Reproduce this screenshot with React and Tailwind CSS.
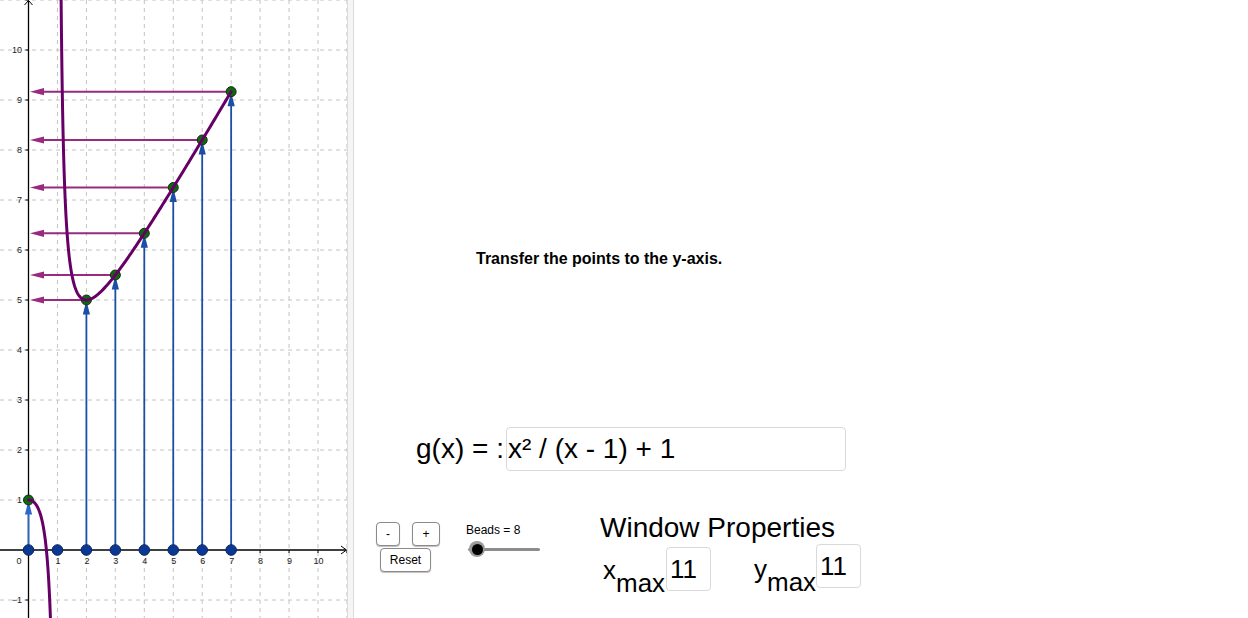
import React from "react";

const X0 = 28.5;
const UX = 28.95;
const Y0 = 550;
const UY = 50;
const X = (x) => X0 + x * UX;
const Y = (y) => Y0 - y * UY;
const g = (x) => (x * x) / (x - 1) + 1;

function curvePath() {
  let d = "";
  for (let i = 0; i <= 160; i++) {
    const x = (0.8 * i) / 160;
    d += (i === 0 ? "M" : "L") + X(x).toFixed(2) + " " + Y(g(x)).toFixed(2) + " ";
  }
  for (let i = 0; i <= 400; i++) {
    const x = 1 + 0.105 * Math.pow(6 / 0.105, i / 400);
    d += (i === 0 ? "M" : "L") + X(x).toFixed(2) + " " + Y(g(x)).toFixed(2) + " ";
  }
  return d;
}

function Graph() {
  const W = 347;
  const H = 618;
  const vx = [];
  for (let k = 1; k <= 11; k++) vx.push(X(k));
  const hy = [];
  for (let j = -1; j <= 11; j++) if (j !== 0) hy.push(Y(j));
  const ks = [0, 2, 3, 4, 5, 6, 7];
  const blue = "#1a4fa3";
  const mag = "#992a7d";
  return (
    <svg width={W} height={H} viewBox={`0 0 ${W} ${H}`} className="block shrink-0">
      <rect x="0" y="0" width={W} height={H} fill="#ffffff" />
      {vx.map((x, i) => (
        <line key={"v" + i} x1={x} y1="0" x2={x} y2={H} stroke="#c4c4c4" strokeWidth="1" strokeDasharray="4 4" />
      ))}
      {hy.map((y, i) => (
        <line key={"h" + i} x1="0" y1={y} x2={W} y2={y} stroke="#c4c4c4" strokeWidth="1" strokeDasharray="4 4" />
      ))}
      <line x1="0" y1={Y0} x2="346" y2={Y0} stroke="#000" strokeWidth="1.3" />
      <polyline points={`341,${Y0 - 4} 346.5,${Y0} 341,${Y0 + 4}`} fill="none" stroke="#000" strokeWidth="1" />
      <line x1={X0} y1="0.5" x2={X0} y2={H} stroke="#000" strokeWidth="1.3" />
      <polyline points={`${X0 - 4},5 ${X0},0.5 ${X0 + 4},5`} fill="none" stroke="#000" strokeWidth="1" />
      {[1, 2, 3, 4, 5, 6, 7, 8, 9, 10, 11].map((k) => (
        <line key={"tx" + k} x1={X(k)} y1={Y0} x2={X(k)} y2={Y0 + 3} stroke="#000" strokeWidth="1" />
      ))}
      {[-1, 1, 2, 3, 4, 5, 6, 7, 8, 9, 10, 11].map((k) => (
        <line key={"ty" + k} x1={X0 - 3} y1={Y(k)} x2={X0} y2={Y(k)} stroke="#000" strokeWidth="1" />
      ))}
      <g fontFamily="'Liberation Sans', Arial, sans-serif" fontSize="9" fill="#222">
        {[1, 2, 3, 4, 5, 6, 7, 8, 9, 10].map((k) => (
          <text key={"lx" + k} x={X(k) + 0.5} y={Y0 + 14} textAnchor="middle">
            {k}
          </text>
        ))}
        <text x="19" y={Y0 + 14} textAnchor="middle">0</text>
        {[-1, 1, 2, 3, 4, 5, 6, 7, 8, 9, 10].map((k) => (
          <text key={"ly" + k} x="22" y={Y(k) + 3.2} textAnchor="end">
            {k < 0 ? "\u2212" + Math.abs(k) : k}
          </text>
        ))}
      </g>
      {ks.map((k) => {
        const x = X(k);
        const ty = Y(g(k)) + 0.5;
        const c = k === 0 ? "#2f67c8" : blue;
        return (
          <g key={"bv" + k}>
            <line x1={x} y1={Y0} x2={x} y2={ty + 10} stroke={c} strokeWidth="1.8" />
            <polygon points={`${x},${ty} ${x - 3.6},${ty + 14} ${x + 3.6},${ty + 14}`} fill={c} />
          </g>
        );
      })}
      {ks
        .filter((k) => k !== 0)
        .map((k) => {
          const y = Y(g(k));
          const tx = X0 + 1.5;
          return (
            <g key={"mv" + k}>
              <line x1={X(k)} y1={y} x2={tx + 10} y2={y} stroke={mag} strokeWidth="2" />
              <polygon points={`${tx},${y} ${tx + 14},${y - 3.6} ${tx + 14},${y + 3.6}`} fill={mag} />
            </g>
          );
        })}
      {[0, 1, 2, 3, 4, 5, 6, 7].map((k) => (
        <circle key={"bp" + k} cx={X(k)} cy={Y0} r="5.3" fill="#0b3893" stroke="#0a2664" strokeWidth="1" />
      ))}
      {ks.map((k) => (
        <circle key={"gp" + k} cx={X(k)} cy={Y(g(k))} r="5" fill="#0b6a0b" stroke="#1b2b1b" strokeWidth="1" />
      ))}
      <path d={curvePath()} fill="none" stroke="#660066" strokeWidth="3" strokeLinejoin="round" strokeLinecap="round" />
    </svg>
  );
}

function Btn({ className, children }) {
  return (
    <div
      className={
        "flex h-[24px] shrink-0 items-center justify-center rounded-[4px] border border-[#8a8a8a] bg-white text-[12px] leading-none text-black shadow-[0_1px_1px_rgba(0,0,0,0.25)] " +
        className
      }
    >
      {children}
    </div>
  );
}

function NumBox({ children, className }) {
  return (
    <div
      className={
        "flex h-[44px] w-[45px] shrink-0 items-center rounded-[4px] border border-[#d9d9d9] pl-[3px] text-[26px] leading-[30px] " +
        className
      }
    >
      {children}
    </div>
  );
}

export default function App() {
  return (
    <div className="flex h-[618px] w-[1248px] overflow-hidden bg-white font-['Liberation_Sans',Arial,sans-serif] text-black">
      <Graph />
      <div className="h-full w-[7px] shrink-0 border-x border-[#dcdcdc] bg-[#f5f5f5]" />
      <div className="flex h-full flex-1 flex-col">
        <div className="pl-[122px] pt-[250px] whitespace-nowrap text-[16px] font-bold leading-[18px]">
          Transfer the points to the y-axis.
        </div>

        <div className="mt-[159px] flex h-[44px] items-center pl-[62px]">
          <div className="w-[90px] whitespace-nowrap text-[28px] leading-[32px]">g(x) = :</div>
          <div className="flex h-[44px] w-[340px] items-center rounded-[4px] border border-[#d9d9d9] pl-[1px] text-[28px] leading-[32px]">
            x² / (x - 1) + 1
          </div>
        </div>

        <div className="mt-[39px] flex items-start pl-[22px]">
          <div className="mt-[12px] flex w-[64px] flex-col">
            <div className="flex gap-[12px]">
              <Btn className="w-[24px]">-</Btn>
              <Btn className="w-[28px]">+</Btn>
            </div>
            <Btn className="ml-[4px] mt-[2px] w-[51px]">Reset</Btn>
          </div>

          <div className="ml-[26px] mt-[13px] flex w-[76px] flex-col">
            <div className="whitespace-nowrap text-[12px] leading-[14px]">Beads = 8</div>
            <div className="relative mt-[4px] h-[16px] w-[76px]">
              <div className="absolute left-[2px] top-[6.5px] h-[3px] w-[72px] rounded-full bg-[#8c8c8c]" />
              <div className="absolute left-[3px] top-0 flex h-[16px] w-[16px] items-center justify-center rounded-full bg-[#9a9a9a]">
                <div className="h-[11px] w-[11px] rounded-full bg-black" />
              </div>
            </div>
          </div>

          <div className="ml-[58px] mt-[2px] flex flex-col">
            <div className="whitespace-nowrap text-[28px] leading-[32px]">Window Properties</div>
            <div className="flex items-start">
              <div className="ml-[3px] mt-[11px] w-[63px] whitespace-nowrap text-[26px] leading-[30px]">
                x<span className="align-[-13px]">max</span>
              </div>
              <NumBox className="mt-[3px]">11</NumBox>
              <div className="ml-[43px] mt-[10px] w-[62px] whitespace-nowrap text-[26px] leading-[30px]">
                y<span className="align-[-13px]">max</span>
              </div>
              <NumBox>11</NumBox>
            </div>
          </div>
        </div>
      </div>
    </div>
  );
}
